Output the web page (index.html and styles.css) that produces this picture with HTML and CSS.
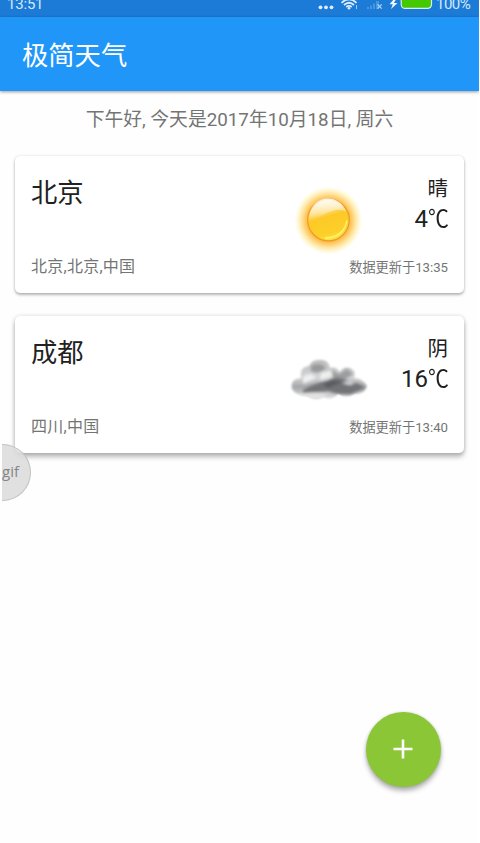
FILE: index.html
```
<!DOCTYPE html>
<html lang="zh-CN">
<head>
<meta charset="utf-8">
<title>极简天气</title>
<link rel="stylesheet" href="styles.css">
</head>
<body>
<div class="app">
  <div class="status">
    <span class="clock">13:51</span>
    <svg class="status-icons" width="119" height="17" viewBox="0 0 119 17">
      <g fill="#e0edfa"><circle cx="3.500" cy="7.300" r="1.900"/><circle cx="9" cy="7.300" r="1.900"/><circle cx="14.500" cy="7.300" r="1.900"/></g>
      <g fill="none" stroke="#e0edfa" stroke-width="1.700">
        <path d="M24.500 2.800Q32-4.200 39.500 2.800M27 5Q32 .5 37 5M29.300 7Q32 4.800 34.700 7"/>
        <path d="M39.500 5v4" stroke-width="1" opacity=".7"/>
      </g>
      <circle cx="32" cy="8.200" r="1.300" fill="#e0edfa"/>
      <path d="M50 9V7h2v2zM53 9V5.500h2V9zM56 9V3.500h2V9zM59 9V1h3v8z" fill="#62a7e4" opacity=".6"/>
      <path d="M60.500 4.300l4.200 4.400M64.700 4.300L60.500 8.700" stroke="#b7d8f6" stroke-width="1.200"/>
      <path d="M78-2L72.500 4.200h3.300L74 9l6.500-6h-3.700L80-2z" fill="#f0f7ff"/>
      <rect x="84.200" y="-4" width="30.300" height="12.400" rx="4" fill="#44c800" stroke="#d9edf5" stroke-width="1.200"/>
    </svg>
    <span class="battery">100%</span>
  </div>
  <header class="toolbar">极简天气</header>
  <p class="greeting">下午好, 今天是2017年10月18日, 周六</p>
  <main class="cards">
    <section class="card">
      <div class="place"><h2>北京</h2><p>北京,北京,中国</p></div>
      <svg class="weather" width="80" height="80" viewBox="0 0 80 80">
        <defs>
          <radialGradient id="halo"><stop offset=".58" stop-color="#ffae35"/><stop offset=".72" stop-color="#ffc44d" stop-opacity=".75"/><stop offset="1" stop-color="#fff06b" stop-opacity="0"/></radialGradient>
          <linearGradient id="disc" x1=".35" y1="0" x2=".65" y2="1"><stop stop-color="#ffe9b5"/><stop offset=".28" stop-color="#ffdc78"/><stop offset=".42" stop-color="#fdc927"/><stop offset=".8" stop-color="#fdcf29"/><stop offset="1" stop-color="#ffe84b"/></linearGradient>
          <linearGradient id="gloss" x1="0" y1="0" x2="0" y2="1"><stop stop-color="#fff" stop-opacity=".9"/><stop offset="1" stop-color="#fff" stop-opacity="0"/></linearGradient>
        </defs>
        <circle cx="39.500" cy="40.500" r="34" fill="url(#halo)"/>
        <circle cx="39.500" cy="40" r="20.800" fill="url(#disc)" stroke="#ed9e24" stroke-width="1.200"/>
        <path d="M20.500 39C20 13 52 13 57 32C46 24 31 39 20.500 39z" fill="url(#gloss)"/>
        <path d="M36 58Q55 57.500 58 40.500" fill="none" stroke="#fff36e" stroke-width="1.500"/>
      </svg>
      <div class="reading"><span class="condition">晴</span><strong>4<span class="unit">℃</span></strong><small>数据更新于13:35</small></div>
    </section>
    <section class="card raised">
      <div class="place"><h2>成都</h2><p>四川,中国</p></div>
      <svg class="weather" width="80" height="80" viewBox="0 0 80 80">
        <defs>
          <linearGradient id="cloud" x1="0" y1="0" x2="0" y2="1"><stop stop-color="#bcbcbe"/><stop offset=".45" stop-color="#d4d5d5"/><stop offset=".68" stop-color="#a5a6a8"/><stop offset="1" stop-color="#e2e2e3"/></linearGradient>
          <filter id="soft" x="-20%" y="-20%" width="140%" height="140%"><feGaussianBlur stdDeviation="1.600"/></filter>
          <filter id="edge" x="-10%" y="-10%" width="120%" height="120%"><feGaussianBlur stdDeviation=".8"/></filter>
          <clipPath id="cloudclip"><path d="M3 49Q1 39 12 38Q10 27 20 26Q23 19 31 20Q39 19 41 28Q47 26 51 32Q54 26 61 28Q68 31 65 38Q73 38 78 46Q76 54 66 54Q57 59 49 54Q43 61 34 57Q27 62 18 56Q6 55 3 49z"/></clipPath>
        </defs>
        <path d="M3 49Q1 39 12 38Q10 27 20 26Q23 19 31 20Q39 19 41 28Q47 26 51 32Q54 26 61 28Q68 31 65 38Q73 38 78 46Q76 54 66 54Q57 59 49 54Q43 61 34 57Q27 62 18 56Q6 55 3 49z" fill="url(#cloud)" filter="url(#edge)"/>
        <g clip-path="url(#cloudclip)"><g filter="url(#soft)">
          <path d="M22 26Q31 21 37 28Q29 35 22 31z" fill="#98999b"/>
          <path d="M14 37Q22 31 27 38L14 44zM32 33L42 31L43 36L31 40z" fill="#f0f0f0"/>
          <path d="M43 30L50 34L58 29L64 34L57 39L44 38z" fill="#9c9d9f"/>
          <path d="M14 50Q26 43 38 41Q48 34 59 41L70 44L76 48L62 54Q49 55 40 51L14 53z" fill="#717376"/>
          <path d="M34 44Q43 38 53 42L39 48z" fill="#595c60"/>
          <path d="M53 43Q59 40 66 43L61 45z" fill="#d9dada"/>
          <path d="M7 55Q23 51 39 55L26 61z" fill="#e3e3e3"/>
        </g></g>
      </svg>
      <div class="reading"><span class="condition">阴</span><strong>16<span class="unit">℃</span></strong><small>数据更新于13:40</small></div>
    </section>
  </main>
  <div class="recorder"><span>gif</span></div>
  <button class="add" aria-label="添加城市"><svg width="20" height="20" viewBox="0 0 20 20"><path d="M10 .5v19M.5 10h19" stroke="#fff" stroke-width="2.600"/></svg></button>
</div>
</body>
</html>
```
FILE: styles.css
```
* { box-sizing: border-box; }
body { margin: 0; background: #fff; }
h2, p { margin: 0; font-weight: 400; }
.app {
  position: relative;
  width: 479px;
  height: 843px;
  overflow: hidden;
  background: #fefefe;
  color: #212121;
  font-family: Roboto, "Noto Sans CJK SC", sans-serif;
}
.status {
  display: flex;
  height: 17px;
  background: #1b7bd7;
  color: #d5e7f8;
  font-size: 15px;
  line-height: 18px;
  overflow: hidden;
}
.clock { width: 317px; padding-left: 7px; margin-top: -5px; letter-spacing: -.2px; }
.battery { margin-top: -5px; letter-spacing: -.5px; }
.toolbar {
  height: 74px;
  padding: 20px 22px;
  background: #2196f9;
  box-shadow: 0 1px 3px rgba(0, 0, 0, .4);
  color: #fff;
  font-size: 26.3px;
  line-height: 38px;
}
.greeting {
  height: 65px;
  padding-top: 15px;
  color: #737573;
  font-size: 18.8px;
  line-height: 28px;
  text-align: center;
  white-space: nowrap;
}
.cards { display: grid; gap: 23px; padding: 0 15px; }
.card {
  display: grid;
  grid-template-columns: 1fr 80px 71px;
  height: 137px;
  padding: 0 16px 0 16px;
  border-radius: 5px;
  background: #fff;
  box-shadow: 0 2px 3px rgba(0, 0, 0, .27), 0 0 3px rgba(0, 0, 0, .12);
}
.raised { box-shadow: 0 4px 5px rgba(0, 0, 0, .27), 0 0 4px rgba(0, 0, 0, .14); }
.place { padding-top: 18px; }
.place h2 { height: 76px; font-size: 26.3px; line-height: 38px; }
.place p { color: #737573; font-size: 16px; letter-spacing: .25px; line-height: 34px; }
.weather { margin: 24px 0 0 -8px; }
.reading { display: flex; flex-direction: column; align-items: flex-end; padding-top: 19px; white-space: nowrap; }
.condition { height: 28px; font-size: 20.5px; line-height: 28px; }
.reading strong { height: 50px; font-size: 24px; font-weight: 400; line-height: 33px; }
.unit { display: inline-block; width: 20px; transform: scaleX(.87); transform-origin: left; }
.reading small { color: #737573; font-size: 13.2px; line-height: 30px; }
.recorder {
  position: absolute;
  left: 2px;
  top: 444px;
  width: 29px;
  height: 57px;
  border: 1px solid #c2c2c2;
  border-left: 0;
  border-radius: 0 29px 29px 0;
  background: rgba(220, 220, 220, .88);
  color: #858585;
  font: 15px/53px "Open Sans", sans-serif;
}
.add {
  position: absolute;
  left: 366px;
  top: 712px;
  display: grid;
  place-items: center;
  width: 75px;
  height: 75px;
  padding: 0;
  border: 0;
  border-radius: 50%;
  background: #8bc636;
  box-shadow: 0 4px 5px rgba(0, 0, 0, .3), 0 0 3px rgba(0, 0, 0, .15);
}
.add svg { margin: -1px 1px 0 0; }
```
